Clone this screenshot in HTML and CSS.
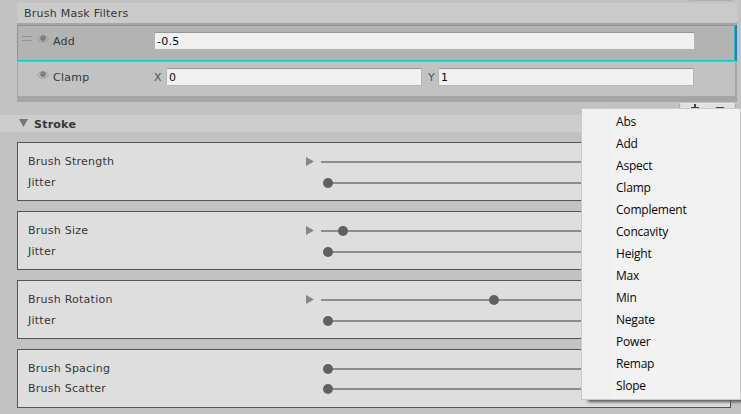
FILE: index.html
```html
<!DOCTYPE html>
<html lang="en">
<head>
<meta charset="utf-8">
<title>Brush Mask Filters</title>
<link rel="stylesheet" href="styles.css">
</head>
<body>
<svg class="defs" width="0" height="0">
  <symbol id="eye" viewBox="0 0 12 8">
    <path d="M.5 4Q3 .6 6 .6T11.500 4Q9 7.400 6 7.400T.5 4Z" fill="none" stroke="#989898"/>
    <circle cx="6" cy="3.200" r="2.700" fill="#7a7a7a"/>
    <circle cx="5.300" cy="2.300" r=".8" fill="#999"/>
  </symbol>
  <symbol id="arrow" viewBox="0 0 8 9"><path d="M0 0L8 4.500L0 9Z" fill="#878787"/></symbol>
</svg>
<main class="inspector">
  <div class="topbar"><span class="stub"></span></div>
  <section class="filters">
    <header class="filters-head">Brush Mask Filters</header>
    <div class="filter selected">
      <span class="grip"></span>
      <svg class="eye"><use href="#eye"/></svg>
      <span class="name">Add</span>
      <span class="field">-0.5</span>
    </div>
    <div class="filter">
      <span class="grip hidden"></span>
      <svg class="eye"><use href="#eye"/></svg>
      <span class="name">Clamp</span>
      <span class="axis">X</span><span class="field">0</span>
      <span class="axis axis-y">Y</span><span class="field">1</span>
    </div>
  </section>
  <div class="footer">
    <div class="buttons"><svg width="56" height="14" viewBox="0 0 56 14"><path d="M15 1V9M11 5H19M36 5H44" stroke="#444" stroke-width="2" fill="none"/></svg></div>
  </div>
  <h2 class="stroke-head"><svg width="9" height="8" viewBox="0 0 9 8"><path d="M0 0H9L4.500 8Z" fill="#777"/></svg><span>Stroke</span></h2>
  <section class="group">
    <div class="row"><span class="label">Brush Strength</span><svg class="arrow"><use href="#arrow"/></svg><span class="track"></span></div>
    <div class="row"><span class="label">Jitter</span><span class="arrow"></span><span class="track inset"><i class="knob" style="left:-5px"></i></span></div>
  </section>
  <section class="group">
    <div class="row"><span class="label">Brush Size</span><svg class="arrow"><use href="#arrow"/></svg><span class="track"><i class="knob" style="left:17px"></i></span></div>
    <div class="row"><span class="label">Jitter</span><span class="arrow"></span><span class="track inset"><i class="knob" style="left:-5px"></i></span></div>
  </section>
  <section class="group">
    <div class="row"><span class="label">Brush Rotation</span><svg class="arrow"><use href="#arrow"/></svg><span class="track"><i class="knob" style="left:168px"></i></span></div>
    <div class="row"><span class="label">Jitter</span><span class="arrow"></span><span class="track inset"><i class="knob" style="left:-5px"></i></span></div>
  </section>
  <section class="group compact">
    <div class="row"><span class="label">Brush Spacing</span><span class="arrow"></span><span class="track inset"><i class="knob" style="left:-5px"></i></span></div>
    <div class="row"><span class="label">Brush Scatter</span><span class="arrow"></span><span class="track inset"><i class="knob" style="left:-5px"></i></span></div>
  </section>
</main>
<ul class="menu">
  <li>Abs</li><li>Add</li><li>Aspect</li><li>Clamp</li><li>Complement</li><li>Concavity</li><li>Height</li><li>Max</li><li>Min</li><li>Negate</li><li>Power</li><li>Remap</li><li>Slope</li>
</ul>
</body>
</html>
```
FILE: styles.css
```css
* { box-sizing: border-box; }
body {
  margin: 0;
  width: 741px;
  height: 414px;
  overflow: hidden;
  position: relative;
  background: #c2c2c2;
  color: #363636;
  font: 11px/16px "DejaVu Sans", sans-serif;
  letter-spacing: 0.24px;
}
.defs { display: none; }
.topbar { height: 3px; display: flex; justify-content: flex-end; padding-right: 8px; }
.stub { width: 44px; height: 1px; background: #b0b0b0; }
.filters { margin: 0 4px 0 17px; height: 99px; background: #a5a5a5; }
.filters-head { height: 20px; padding: 3px 7px 1px; background: #cbcbcb; margin-bottom: 2px; }
.filter {
  display: flex;
  height: 34px;
  margin: 0 2px 0 1px;
  padding: 6px 41px 0 4px;
  background: #c2c2c2;
}
.filter.selected {
  height: 36px;
  margin: 0 0 1px;
  padding: 6px 40px 0 4px;
  background: #b3b3b3;
  border: 1px solid #12c8ca;
  border-right: 2px solid #3575bd;
  box-shadow: inset -1px 0 #12c8ca;
}
.grip { width: 10px; height: 5px; margin-top: 4px; border: solid #929292; border-width: 1px 0; }
.grip.hidden { visibility: hidden; }
.eye { width: 12px; height: 8px; margin: 3px 4px 0 5px; }
.name { width: 101px; padding-top: 2px; }
.field {
  flex: 1;
  height: 18px;
  padding: 0 2px;
  line-height: 18px;
  color: #090909;
  background: #f0f0f0;
  border: 1px solid #b5b5b5;
  border-top-color: #969696;
  border-radius: 2px;
}
.axis { width: 12px; padding-top: 2px; color: #555; }
.axis-y { width: 16px; padding-left: 6px; }
.footer { height: 13px; display: flex; justify-content: flex-end; padding-right: 5px; overflow: hidden; }
.buttons { width: 57px; height: 16px; margin-top: 1px; background: #e1e1e1; border: 1px solid #aaa; border-top-color: #e8e8e8; border-radius: 3px; }
.buttons svg { display: block; margin-top: -1px; }
.stroke-head { display: flex; align-items: center; height: 17px; margin: 0 0 10px; padding-left: 19px; background: #cdcdcd; font-size: 11px; line-height: 17px; }
.stroke-head span { margin: 1px 0 0 6px; }
.stroke-head svg { margin-top: -1px; }
.group { height: 59px; margin: 0 10px 10px 17px; padding: 8px 0 0 10px; background: #dedede; border: 1px solid #545454; }
.row { display: flex; height: 21px; align-items: center; }
.compact .row { height: 20px; }
.label { width: 278px; }
.compact .label { padding-top: 1px; }
.arrow { width: 8px; height: 9px; }
.track { position: relative; flex: 1; height: 2px; margin: 1px 10px 0 7px; background: #8d8d8d; }
.compact .track { margin-top: 2px; }
.track.inset { margin-left: 14px; }
.knob { position: absolute; top: -4px; width: 10px; height: 10px; border-radius: 50%; background: #606060; }
.menu {
  position: absolute;
  left: 581px;
  top: 108px;
  width: 160px;
  height: 292px;
  margin: 0;
  padding: 2px 0 0 34px;
  list-style: none;
  color: #080808;
  background: linear-gradient(90deg, #f0f0f0 29px, #f2f2f2 29px);
  border: 1px solid #c9c9c9;
  box-shadow: 5px 4px 3px -2px #555;
  font: 12px/22px "Open Sans", "Noto Sans", sans-serif;
  letter-spacing: -0.2px;
}
```
